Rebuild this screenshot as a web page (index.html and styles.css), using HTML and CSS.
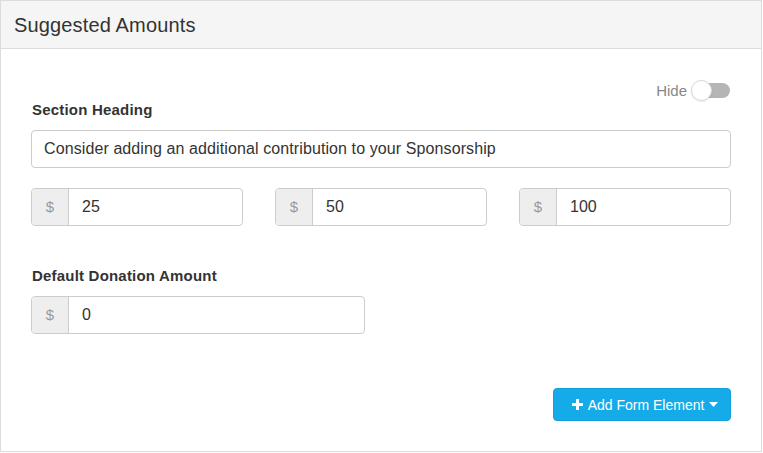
FILE: index.html
```html
<!DOCTYPE html>
<html>
<head>
<meta charset="utf-8">
<link rel="stylesheet" href="styles.css">
</head>
<body>
<div class="panel">
  <div class="panel-heading">Suggested Amounts</div>
  <div class="panel-body">
    <div class="toggle-row">
      <span class="toggle-label">Hide</span>
      <span class="switch"><span class="knob"></span></span>
    </div>
    <label class="field-label">Section Heading</label>
    <div class="text-input">Consider adding an additional contribution to your Sponsorship</div>
    <div class="amount-row">
      <div class="input-group"><span class="addon">$</span><span class="value">25</span></div>
      <div class="input-group"><span class="addon">$</span><span class="value">50</span></div>
      <div class="input-group"><span class="addon">$</span><span class="value">100</span></div>
    </div>
    <label class="field-label default-label">Default Donation Amount</label>
    <div class="input-group default-group"><span class="addon">$</span><span class="value">0</span></div>
    <div class="footer-row">
      <button class="add-btn"><svg class="plus" width="11" height="11" viewBox="0 0 11 11"><rect x="4" y="0" width="3" height="11" fill="#fff"/><rect x="0" y="4" width="11" height="3" fill="#fff"/></svg>Add Form Element<svg class="caret" width="9" height="5" viewBox="0 0 9 5"><path d="M0 0 L9 0 L4.5 5 Z" fill="#fff"/></svg></button>
    </div>
  </div>
</div>
</body>
</html>
```
FILE: styles.css
```css
* { box-sizing: border-box; }
html, body { margin: 0; padding: 0; background: #fff; }
body { font-family: "Liberation Sans", Arial, sans-serif; color: #333; }
.panel {
  width: 762px;
  height: 452px;
  border: 1px solid #dcdcdc;
  display: flex;
  flex-direction: column;
}
.panel-heading {
  height: 48px;
  background: #f5f5f5;
  border-bottom: 1px solid #dcdcdc;
  padding: 0 13px;
  font-size: 20px;
  line-height: 48px;
  letter-spacing: 0.15px;
  color: #333;
}
.panel-body {
  padding: 0 30px;
  display: flex;
  flex-direction: column;
  flex: 1;
}
.toggle-row {
  display: flex;
  justify-content: flex-end;
  align-items: center;
  margin-top: 31px;
  height: 21px;
}
.toggle-label {
  font-size: 15px;
  color: #888;
  margin-right: 5px;
}
.switch {
  position: relative;
  width: 38px;
  height: 15px;
  background: #b5b5b5;
  border-radius: 8px;
  margin-right: 1px;
}
.knob {
  position: absolute;
  left: -1px;
  top: -3px;
  width: 21px;
  height: 21px;
  border-radius: 50%;
  background: #fff;
  border: 1px solid #d6d6d6;
  box-shadow: 0 1px 2px rgba(0,0,0,0.08);
}
.field-label {
  font-size: 15px;
  font-weight: bold;
  color: #333;
  line-height: 18px;
  margin-top: 0;
  letter-spacing: 0.2px;
  padding-left: 1px;
}
.text-input {
  margin-top: 11px;
  height: 38px;
  border: 1px solid #ccc;
  border-radius: 4px;
  padding: 0 12px;
  font-size: 16px;
  line-height: 36px;
  letter-spacing: 0.1px;
  color: #333;
}
.amount-row {
  display: flex;
  gap: 32px;
  margin-top: 20px;
}
.input-group {
  display: flex;
  width: 212px;
  height: 38px;
  border: 1px solid #ccc;
  border-radius: 4px;
  overflow: hidden;
}
.addon {
  width: 37px;
  background: #eee;
  border-right: 1px solid #ccc;
  color: #999;
  font-size: 15px;
  line-height: 36px;
  text-align: center;
}
.value {
  flex: 1;
  padding: 0 13px;
  font-size: 16px;
  line-height: 36px;
  color: #333;
}
.default-label { margin-top: 41px; }
.default-group { width: 334px; margin-top: 11px; }
.footer-row {
  display: flex;
  justify-content: flex-end;
  margin-top: 54px;
}
.add-btn {
  width: 178px;
  height: 33px;
  background: #14abe8;
  border: 1px solid #11a0da;
  border-radius: 4px;
  color: #fff;
  font-family: "Liberation Sans", Arial, sans-serif;
  font-size: 14px;
  display: flex;
  align-items: center;
  justify-content: center;
  padding: 0 0 0 6px;
}
.plus { margin-right: 5px; }
.caret { margin-left: 5px; }
```
